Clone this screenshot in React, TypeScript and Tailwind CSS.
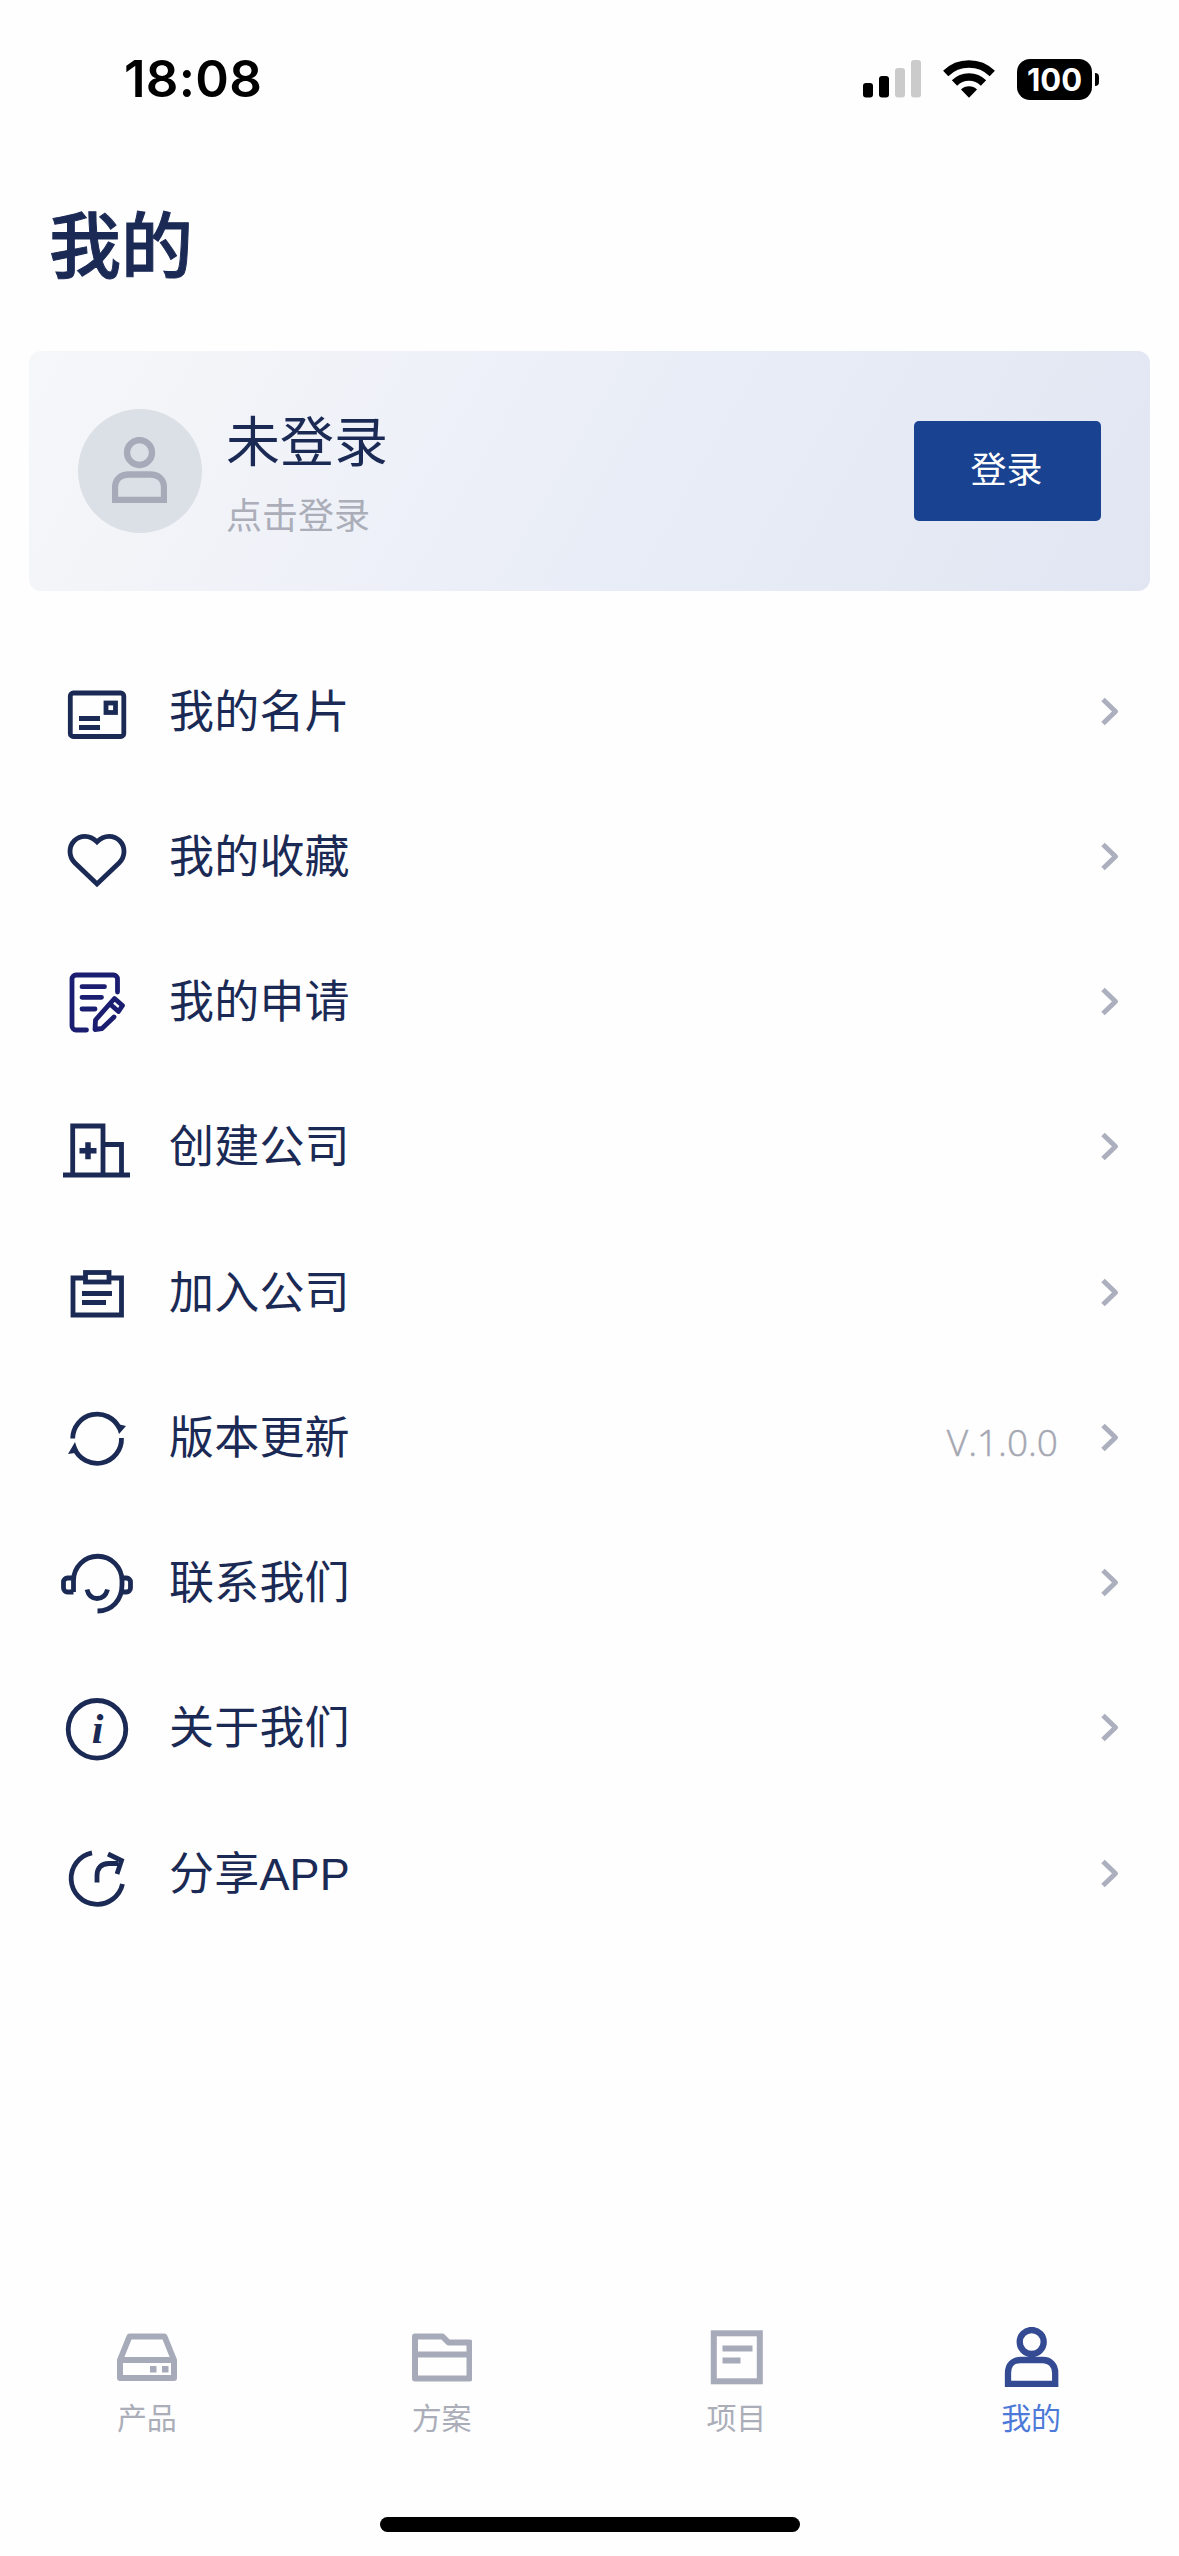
import React, { useState } from "react";

type IconProps = { className?: string };

const stroke = {
  viewBox: "0 0 72 72",
  fill: "none",
  stroke: "currentColor",
  strokeWidth: 4.8,
};

const CardIcon: React.FC<IconProps> = ({ className }) => (
  <svg className={className} {...stroke}>
    <rect x="9.3" y="17" width="53.5" height="43.5" rx="3" />
    <rect x="45" y="27" width="9.5" height="9.5" />
    <path d="M18 42.5H39M18 51.5H39" />
  </svg>
);

const HeartIcon: React.FC<IconProps> = ({ className }) => (
  <svg className={className} {...stroke}>
    <path d="M36 20.8C32 16.8 28 15.3 24 15.3C15.5 15.3 9 22 9 30.5C9 35 11 39 14 42L36 63L58 42C61 39 63 35 63 30.5C63 22 56.5 15.3 48 15.3C44 15.3 40 16.8 36 20.8Z" />
  </svg>
);

const ApplyIcon: React.FC<IconProps> = ({ className }) => (
  <svg className={className} {...stroke} strokeLinecap="round" strokeLinejoin="round">
    <path d="M56.5 26V13A4 4 0 0 0 52.5 9H15A4 4 0 0 0 11 13V60A4 4 0 0 0 15 64H25.5" />
    <path d="M21 20.7H43.5M21 31.3H40.500M21 43H34" />
    <path d="M53 51L41 62.5L34 63.5L34.5 54L53.5 32.5L61.5 39.5L57.5 45.5L49.5 38.5" />
  </svg>
);

const BuildingIcon: React.FC<IconProps> = ({ className }) => (
  <svg className={className} {...stroke}>
    <path d="M2 64H69M11.7 64V15H42V64M42 33.5H60.5V64" />
    <path d="M18.5 39.7H35.5M27 31.2V48.2" strokeWidth="5.5" />
  </svg>
);

const ClipboardIcon: React.FC<IconProps> = ({ className }) => (
  <svg className={className} {...stroke}>
    <path d="M25 21H12V58H60.5V21H48" />
    <rect x="24.5" y="15.5" width="23.5" height="9.5" />
    <path d="M21 36.5H51M21 45.5H45" />
  </svg>
);

const RefreshIcon: React.FC<IconProps> = ({ className }) => (
  <svg className={className} {...stroke}>
    <path d="M11.7 36.5A24.5 24.5 0 0 1 58.5 26.5" />
    <path d="M60.5 36A24.5 24.5 0 0 1 13.5 46.5" />
    <path d="M54.5 21.5L58 32L65 24ZM14 40L17.5 50.5L7 52Z" fill="currentColor" stroke="none" />
  </svg>
);

const HeadsetIcon: React.FC<IconProps> = ({ className }) => (
  <svg className={className} {...stroke}>
    <path d="M12.5 45V33.5A24.2 24.2 0 0 1 61 33.5V38C61 53 51 64 36.5 64" />
    <path d="M12.5 31H6.5A4 4 0 0 0 2.5 35V41A4 4 0 0 0 6.5 45H12.5" />
    <path d="M61 31H65.5A4 4 0 0 1 69.5 35V41A4 4 0 0 1 65.5 45H61" />
    <path d="M26 42.5C27.5 48.5 31 51.5 36 51.5S45 48.5 46.5 42.5" />
  </svg>
);

const InfoIcon: React.FC<IconProps> = ({ className }) => (
  <svg className={className} {...stroke}>
    <circle cx="36" cy="37.3" r="28.8" />
    <text
      x="36.5"
      y="50.5"
      textAnchor="middle"
      fill="currentColor"
      stroke="none"
      className="font-['Liberation_Serif',serif] text-[42px] font-bold italic"
    >
      i
    </text>
  </svg>
);

const ShareIcon: React.FC<IconProps> = ({ className }) => (
  <svg className={className} {...stroke}>
    <path d="M31 14.8A26 26 0 1 0 61.5 46" />
    <path d="M36 44.500V38C36 29.5 40 25.5 48 25.5H57" />
    <path d="M47 16L60.5 22.5L56 36" />
  </svg>
);

const ProductIcon: React.FC<IconProps> = ({ className }) => (
  <svg className={className} viewBox="0 0 60 60" fill="none" stroke="currentColor" strokeWidth="6" strokeLinejoin="round">
    <path d="M3 33L12.5 9.5H47.5L57 33V51H3ZM3 33H57" />
    <path d="M33 42.3H39.5M45 42.3H51.5" strokeWidth="6.5" />
  </svg>
);

const FolderIcon: React.FC<IconProps> = ({ className }) => (
  <svg className={className} viewBox="0 0 60 60" fill="none" stroke="currentColor" strokeWidth="6" strokeLinejoin="round">
    <path d="M3 9.5H30.5L36.5 15.5H57.5V51.5H3ZM3 27.5H57.5" />
  </svg>
);

const ProjectIcon: React.FC<IconProps> = ({ className }) => (
  <svg className={className} viewBox="0 0 60 60" fill="none" stroke="currentColor" strokeWidth="6">
    <rect x="6.8" y="6.3" width="46" height="48" />
    <path d="M15.5 21.5H45.5M15.5 33.5H33.5" />
  </svg>
);

const UserIcon: React.FC<IconProps> = ({ className }) => (
  <svg className={className} viewBox="0 0 60 60" fill="none" stroke="currentColor" strokeWidth="6.3">
    <circle cx="29.7" cy="15" r="12" />
    <path d="M6 57V46C6 38 11 33 18.5 33H41C48 33 53.200 38 53.200 46V57Z" />
  </svg>
);

const ChevronIcon: React.FC<IconProps> = ({ className }) => (
  <svg className={className} viewBox="0 0 20 30" fill="none" stroke="currentColor" strokeWidth="5" strokeLinejoin="round">
    <path d="M3 2.5L15.5 14.5L3 26.5" />
  </svg>
);

const menuItems = [
  { label: "我的名片", icon: CardIcon },
  { label: "我的收藏", icon: HeartIcon },
  { label: "我的申请", icon: ApplyIcon, color: "text-[#1b1e70]" },
  { label: "创建公司", icon: BuildingIcon },
  { label: "加入公司", icon: ClipboardIcon },
  { label: "版本更新", icon: RefreshIcon, extra: "V.1.0.0" },
  { label: "联系我们", icon: HeadsetIcon },
  { label: "关于我们", icon: InfoIcon },
  { label: "分享APP", icon: ShareIcon },
];

const tabs = [
  { label: "产品", icon: ProductIcon },
  { label: "方案", icon: FolderIcon },
  { label: "项目", icon: ProjectIcon },
  { label: "我的", icon: UserIcon },
];

const StatusBar: React.FC = () => (
  <div className="flex h-[158px] items-center justify-between pl-[124px] pr-[80px] text-black">
    <span className="pb-0.5 font-['Inter',sans-serif] text-[51px] font-semibold leading-none tracking-[0.3px]">18:08</span>
    <div className="flex items-center">
      <svg className="h-[38px] w-[58px]" viewBox="0 0 58 38">
        <rect x="0" y="23" width="10" height="14.5" rx="3" />
        <rect x="16" y="16" width="10" height="21.5" rx="3" />
        <rect x="32" y="8" width="10" height="29.5" rx="3" fill="#cbcbcb" />
        <rect x="48" y="0" width="10" height="37.5" rx="3" fill="#cbcbcb" />
      </svg>
      <svg className="ml-[22px] h-[38px] w-[52px]" viewBox="0 0 52 38" fill="none" stroke="black" strokeWidth="7.5">
        <path d="M2.7 13.5A33.5 33.5 0 0 1 49.3 13.5" />
        <path d="M11.5 23A20.5 20.5 0 0 1 40.5 23" />
        <path d="M18 29.5A11.5 11.5 0 0 1 34 29.5L26 37.8Z" fill="black" stroke="none" />
      </svg>
      <div className="ml-[22px] flex h-[41px] w-[75px] items-center justify-center rounded-[13px] bg-black font-['Inter',sans-serif] text-[31px] font-bold leading-none text-white">
        100
      </div>
      <div className="ml-[3px] h-[13px] w-[4px] rounded-r-full bg-black" />
    </div>
  </div>
);

const App: React.FC = () => {
  const [activeTab, setActiveTab] = useState("我的");

  return (
    <div className="flex h-[2556px] w-[1179px] flex-col bg-[#fefefe] font-['Liberation_Sans','Noto_Sans_CJK_SC',sans-serif] text-[#1b2a55]">
      <StatusBar />

      <h1 className="mt-[53px] pl-[49px] text-[72px] font-medium leading-[72px] [-webkit-text-stroke:1px_#1b2a55]">我的</h1>

      <div className="mx-[29px] mt-[68px] flex h-[240px] items-center rounded-xl bg-linear-[120deg] from-[#f6f7f9] via-[#e9edf7] via-55% to-[#e2e6f2] px-[49px]">
        <div className="flex size-[124px] items-center justify-center rounded-full bg-[#dbe0e6]">
          <svg className="mb-0.5 mr-0.5 h-[66px] w-[55px] text-[#a7abb9]" viewBox="0 0 55 66" fill="none" stroke="currentColor" strokeWidth="6.3">
            <circle cx="27.5" cy="15.5" r="12.5" />
            <path d="M3 63V51C3 42 9 37.5 17 37.5H38C46 37.5 52 42 52 51V63Z" />
          </svg>
        </div>
        <div className="ml-[24px] flex flex-col pt-2">
          <span className="text-[54px] leading-[72px]">未登录</span>
          <span className="mt-3 text-[36px] leading-[52px] text-[#abaeb9]">点击登录</span>
        </div>
        <button className="ml-auto h-[100px] w-[187px] rounded-[5px] bg-[#194291] pr-0.5 text-[36px] text-white">登录</button>
      </div>

      <div className="mt-12 flex flex-col">
        {menuItems.map((item) => (
          <div key={item.label} className="flex h-[145.25px] items-center pl-[61px] pr-[59px]">
            <item.icon className={`size-[72px] ${item.color || ""}`} />
            <span className="ml-9 pt-0.5 text-[45px] leading-[66px] tracking-[0.2px]">{item.label}</span>
            {item.extra && (
              <span className="ml-auto mr-[42px] mt-2 font-['Open_Sans',sans-serif] text-[37px] font-light text-[#a5a7b2] [-webkit-text-stroke:0.5px_#a5a7b2]">
                {item.extra}
              </span>
            )}
            <ChevronIcon className={`h-[30px] w-[20px] text-[#acafbd] ${item.extra ? "" : "ml-auto"}`} />
          </div>
        ))}
      </div>

      {/* Tab bar */}
      <div className="mt-auto flex">
        {tabs.map((tab) => {
          const active = tab.label === activeTab;
          return (
            <button key={tab.label} onClick={() => setActiveTab(tab.label)} className="flex flex-1 flex-col items-center">
              <tab.icon className={`size-[60px] ${active ? "text-[#344b93]" : "text-[#a7abb9]"}`} />
              <span className={`mt-2.5 pr-px text-[30px] leading-[44px] ${active ? "text-[#4d7ad8]" : "text-[#abaeb9]"}`}>{tab.label}</span>
            </button>
          );
        })}
      </div>

      {/* Home indicator */}
      <div className="mx-auto mb-[24px] mt-[76px] h-[15px] w-[420px] rounded-full bg-black" />
    </div>
  );
};

export default App;
